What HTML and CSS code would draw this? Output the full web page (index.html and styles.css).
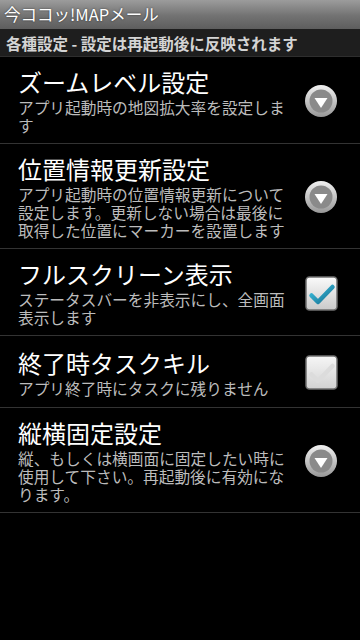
FILE: index.html
```html
<!DOCTYPE html>
<html lang="ja">
<head>
<meta charset="utf-8">
<title>今ココッ!MAPメール</title>
<link rel="stylesheet" href="styles.css">
</head>
<body>
<div class="app">
  <div class="titlebar">今ココッ!MAPメール</div>
  <div class="category">各種設定 - 設定は再起動後に反映されます</div>
  <ul class="prefs">
    <li class="pref">
      <div class="text">
        <div class="title">ズームレベル設定</div>
        <div class="summary">アプリ起動時の地図拡大率を設定します</div>
      </div>
      <div class="widget">
        <svg class="dropdown" width="34" height="34" viewBox="0 0 34 34">
          <defs>
            <linearGradient id="ring1" x1="0" y1="0" x2="0" y2="1"><stop offset="0" stop-color="#f2f2f2"/><stop offset="1" stop-color="#989898"/></linearGradient>
          </defs>
          <circle cx="17" cy="17" r="16" fill="url(#ring1)"/>
          <circle cx="17" cy="17" r="11.5" fill="#8a8a8a"/>
          <polygon points="10.5,14 23.5,14 17,24" fill="#ffffff"/>
        </svg>
      </div>
    </li>
    <li class="pref">
      <div class="text">
        <div class="title">位置情報更新設定</div>
        <div class="summary">アプリ起動時の位置情報更新について設定します。更新しない場合は最後に取得した位置にマーカーを設置します</div>
      </div>
      <div class="widget">
        <svg class="dropdown" width="34" height="34" viewBox="0 0 34 34">
          <defs>
            <linearGradient id="ring2" x1="0" y1="0" x2="0" y2="1"><stop offset="0" stop-color="#f2f2f2"/><stop offset="1" stop-color="#989898"/></linearGradient>
          </defs>
          <circle cx="17" cy="17" r="16" fill="url(#ring2)"/>
          <circle cx="17" cy="17" r="11.5" fill="#8a8a8a"/>
          <polygon points="10.5,14 23.5,14 17,24" fill="#ffffff"/>
        </svg>
      </div>
    </li>
    <li class="pref">
      <div class="text">
        <div class="title">フルスクリーン表示</div>
        <div class="summary">ステータスバーを非表示にし、全画面表示します</div>
      </div>
      <div class="widget">
        <svg class="check" width="33" height="35" viewBox="0 0 33 35">
          <defs>
            <linearGradient id="box1" x1="0" y1="0" x2="0" y2="1"><stop offset="0" stop-color="#fbfbfb"/><stop offset="1" stop-color="#c9c9c9"/></linearGradient>
            <linearGradient id="tick1" x1="0" y1="0" x2="1" y2="1"><stop offset="0" stop-color="#3cc0e0"/><stop offset="1" stop-color="#156f90"/></linearGradient>
          </defs>
          <rect x="1" y="1" width="31" height="33" rx="3.5" fill="url(#box1)" stroke="#6f6f6f" stroke-width="1.5"/>
          <path d="M6.5 19.5 L13 26 L27.5 11" fill="none" stroke="url(#tick1)" stroke-width="4.5" stroke-linecap="round" stroke-linejoin="round"/>
        </svg>
      </div>
    </li>
    <li class="pref">
      <div class="text">
        <div class="title">終了時タスクキル</div>
        <div class="summary">アプリ終了時にタスクに残りません</div>
      </div>
      <div class="widget">
        <svg class="check" width="33" height="35" viewBox="0 0 33 35">
          <defs>
            <linearGradient id="box2" x1="0" y1="0" x2="0" y2="1"><stop offset="0" stop-color="#f6f6f6"/><stop offset="1" stop-color="#d2d2d2"/></linearGradient>
          </defs>
          <rect x="1" y="1" width="31" height="33" rx="3.5" fill="url(#box2)" stroke="#6f6f6f" stroke-width="1.5"/>
          <path d="M6.5 19.5 L13 26 L27.5 11" fill="none" stroke="#dcdcdc" stroke-width="4.5" stroke-linecap="round" stroke-linejoin="round"/>
        </svg>
      </div>
    </li>
    <li class="pref">
      <div class="text">
        <div class="title">縦横固定設定</div>
        <div class="summary">縦、もしくは横画面に固定したい時に使用して下さい。再起動後に有効になります。</div>
      </div>
      <div class="widget">
        <svg class="dropdown" width="34" height="34" viewBox="0 0 34 34">
          <defs>
            <linearGradient id="ring3" x1="0" y1="0" x2="0" y2="1"><stop offset="0" stop-color="#f2f2f2"/><stop offset="1" stop-color="#989898"/></linearGradient>
          </defs>
          <circle cx="17" cy="17" r="16" fill="url(#ring3)"/>
          <circle cx="17" cy="17" r="11.5" fill="#8a8a8a"/>
          <polygon points="10.5,14 23.5,14 17,24" fill="#ffffff"/>
        </svg>
      </div>
    </li>
  </ul>
</div>
</body>
</html>
```
FILE: styles.css
```css
html, body {
  margin: 0;
  padding: 0;
  background: #000;
}
body {
  font-family: "Noto Sans CJK JP", "Noto Sans", sans-serif;
  color: #fff;
}
.app {
  width: 360px;
  min-height: 640px;
  background: #000;
}
.titlebar {
  height: 29px;
  box-sizing: border-box;
  padding: 0 4px;
  line-height: 29px;
  font-size: 16.5px;
  color: #fff;
  background: linear-gradient(#9c9c9c, #727272 55%, #5e5e5e);
  text-shadow: 0 0 2px rgba(0,0,0,0.6);
  white-space: nowrap;
}
.category {
  height: 28px;
  box-sizing: border-box;
  padding: 0 6px;
  line-height: 28px;
  font-size: 15.5px;
  font-weight: bold;
  color: #d4d4d4;
  background: #1e1e1e;
  border-bottom: 1px solid #2e2e2e;
  white-space: nowrap;
}
.prefs {
  list-style: none;
  margin: 0;
  padding: 0;
}
.pref {
  display: flex;
  align-items: center;
  box-sizing: border-box;
  min-height: 72px;
  padding: 10px 22px 8px 18px;
  border-bottom: 1px solid #333;
}
.text {
  flex: 1;
  min-width: 0;
}
.title {
  font-size: 24px;
  line-height: 30px;
  height: 30px;
  color: #fff;
  white-space: nowrap;
}
.summary {
  margin-top: 2px;
  width: 272px;
  font-size: 15.7px;
  line-height: 18px;
  color: #bcbcbc;
  line-break: strict;
}
.widget {
  flex: none;
  width: 34px;
  display: flex;
  justify-content: center;
}
.widget svg {
  display: block;
}
```
